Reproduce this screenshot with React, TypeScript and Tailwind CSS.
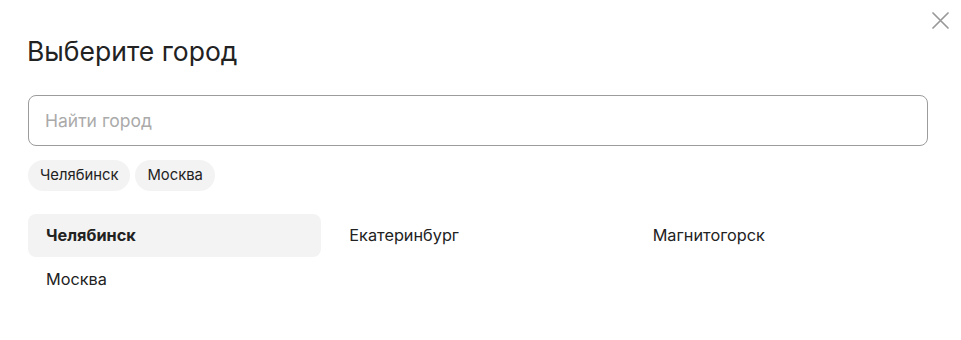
const chips = ['Челябинск', 'Москва'];
const cities = ['Челябинск', 'Екатеринбург', 'Магнитогорск', 'Москва'];

export default function App() {
  return (
    <div className="relative w-[961px] h-[340px] bg-white pl-[28px] pr-[33px] pt-[33px] text-[#222]" style={{ fontFamily: 'Inter, "Noto Sans", sans-serif' }}>
      {/* close */}
      <button className="absolute top-[12px] left-[932px] text-[#999]">
        <svg width="17" height="17" viewBox="0 0 17 17" fill="none" stroke="currentColor" strokeWidth="1.7" strokeLinecap="round">
          <path d="M1 1L16 16M16 1L1 16" />
        </svg>
      </button>

      <h1 className="text-[26.5px] leading-[36px] font-normal -ml-px">Выберите город</h1>

      <input
        placeholder="Найти город"
        className="mt-[26px] w-full h-[51px] rounded-lg border border-[#9c9c9c] px-4 text-[17.5px] outline-none placeholder:text-[#aaa]"
      />

      <div className="mt-[14px] flex gap-[5px]">
        {chips.map((c) => (
          <span key={c} className="h-[31px] px-3 flex items-center rounded-full bg-[#f3f3f3] text-[14.8px]">
            {c}
          </span>
        ))}
      </div>

      <div className="mt-[23px] grid grid-cols-3 gap-x-2.5 gap-y-px">
        {cities.map((c, i) => (
          <div
            key={c}
            className={`h-[43px] flex items-center px-[18px] rounded-lg text-[16.3px] ${i === 0 ? 'bg-[#f3f3f3] font-bold' : ''}`}
          >
            {c}
          </div>
        ))}
      </div>
    </div>
  );
}
